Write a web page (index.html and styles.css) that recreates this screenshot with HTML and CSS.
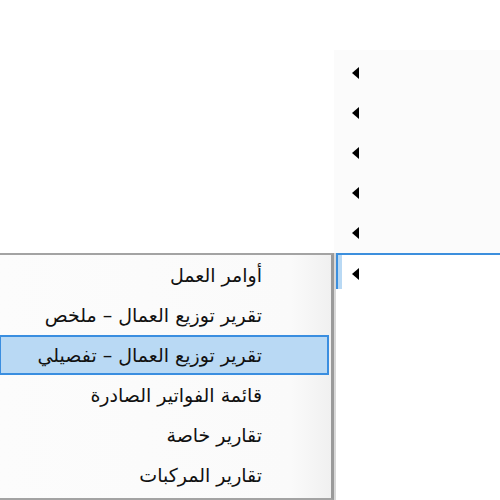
FILE: index.html
```html
<!DOCTYPE html>
<html lang="ar">
<head>
    <meta charset="UTF-8">
    <title>قائمة التقارير</title>
    <link rel="stylesheet" href="styles.css">
</head>
<body>
    <div class="tree">
        <div class="tree-row"><span class="arrow"></span></div>
        <div class="tree-row"><span class="arrow"></span></div>
        <div class="tree-row"><span class="arrow"></span></div>
        <div class="tree-row"><span class="arrow"></span></div>
        <div class="tree-row"><span class="arrow"></span></div>
        <div class="tree-row active"><span class="focus-mark"></span><span class="arrow"></span></div>
    </div>

    <!-- القائمة المنبثقة -->
    <ul class="popup-menu" dir="rtl">
        <li>أوامر العمل</li>
        <li>تقرير توزيع العمال – ملخص</li>
        <li class="selected">تقرير توزيع العمال – تفصيلي</li>
        <li>قائمة الفواتير الصادرة</li>
        <li>تقارير خاصة</li>
        <li>تقارير المركبات</li>
    </ul>
</body>
</html>
```

FILE: styles.css
```css
/* Estilos Generales */
* {
    margin: 0;
    padding: 0;
    box-sizing: border-box;
}
html, body {
    background-color: #ffffff;
    font-family: Tahoma, "DejaVu Sans", sans-serif;
    width: 500px;
    height: 500px;
    overflow: hidden;
}

/* Panel del árbol a la derecha */
.tree {
    margin-left: 334px;
    margin-top: 50px;
    padding-top: 3px;
    background-color: #fbfbfb;
    height: 243px;
}
.tree-row {
    height: 40px;
    display: flex;
    align-items: center;
    padding-left: 18px;
    position: relative;
}
.tree-row.active {
    background-color: #ffffff;
    border-top: 2px solid #3c8fdd;
    margin-left: 2px;
    padding-left: 16px;
}
.focus-mark {
    position: absolute;
    left: 0;
    top: 0;
    width: 6px;
    height: 34px;
    border-left: 2px solid #3c8fdd;
    background-color: #b9d9f4;
}
.arrow {
    width: 0;
    height: 0;
    border-top: 6px solid transparent;
    border-bottom: 6px solid transparent;
    border-right: 7px solid #000000;
}

/* Menú emergente */
.popup-menu {
    position: absolute;
    left: -3px;
    top: 253px;
    width: 337px;
    height: 247px;
    list-style: none;
    background: linear-gradient(to left, #f0f0f0 0, #fafafa 40px, #fcfcfc 100%);
    border: 2px solid #a3a3a3;
    border-right: 3px solid #9a9a9a;
    box-shadow: 2px 0 0 #d8d8d8;
    padding: 0 2px 0 0;
    font-size: 19px;
    color: #111111;
}
.popup-menu li {
    height: 40px;
    line-height: 38px;
    padding-right: 66px;
    text-align: right;
    white-space: nowrap;
    border: 1px solid transparent;
}
.popup-menu li.selected {
    background-color: #b9d9f4;
    border: 2px solid #3a8ee0;
    line-height: 36px;
    padding-right: 65px;
}
```
